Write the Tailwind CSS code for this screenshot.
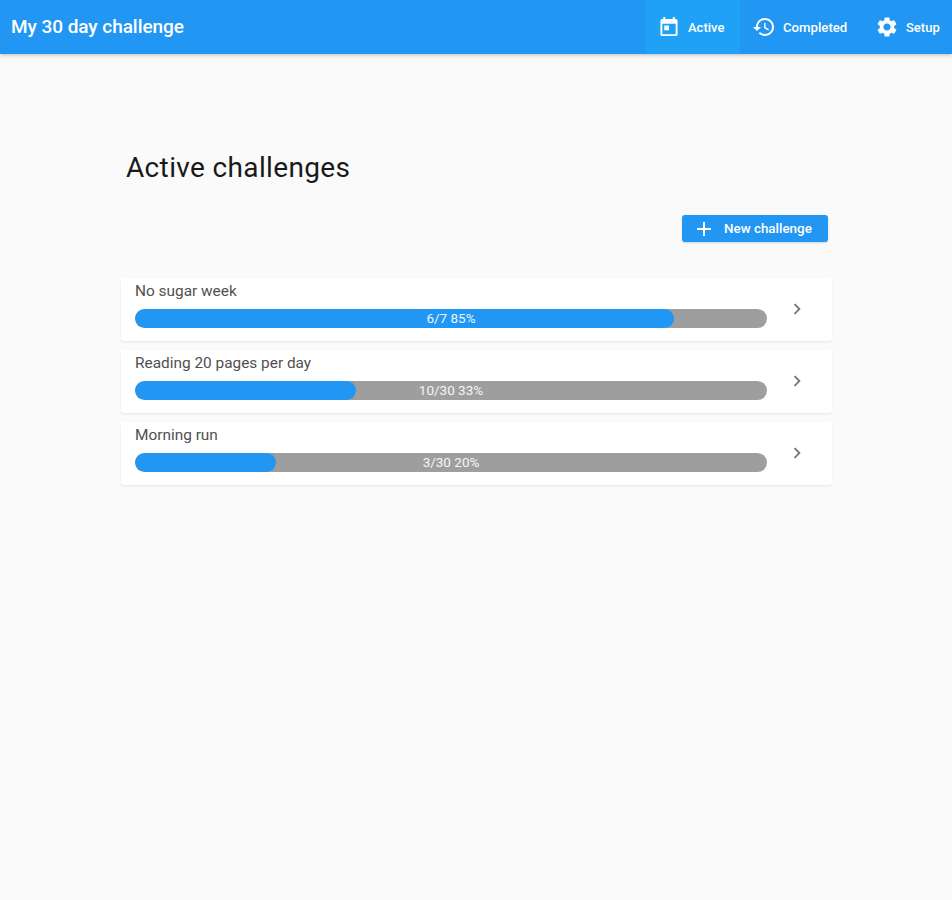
<!DOCTYPE html>
<html lang="en">
<head>
    <meta charset="UTF-8">
    <meta name="viewport" content="width=device-width, initial-scale=1.0">
    <title>My 30 day challenge</title>
    <script src="https://cdn.jsdelivr.net/npm/@tailwindcss/browser@4"></script>
</head>
<body class="bg-[#fafafa] min-h-[900px] font-['Roboto',sans-serif]">
    <!-- App bar -->
    <header class="h-[54px] bg-[#2196f3] flex items-stretch justify-between shadow-[0_1px_4px_rgba(0,0,0,0.25)] text-white">
        <div class="pl-[11px] flex items-center text-[19px] font-medium tracking-[-0.05px]">My 30 day challenge</div>
        <nav class="flex">
            <div class="w-[94px] bg-[#1fa2f6] flex items-center pl-[14px] gap-[10px] text-[13px] font-medium">
                <svg class="w-[18px] h-[20px]" viewBox="3 1 18 21" fill="#fff"><path d="M19 3h-1V1h-2v2H8V1H6v2H5c-1.1 0-2 .9-2 2v14c0 1.1.9 2 2 2h14c1.1 0 2-.9 2-2V5c0-1.1-.9-2-2-2zm0 16H5V8h14v11zM7 10h5v5H7z"/></svg>
                <span class="pt-[1px]">Active</span>
            </div>
            <div class="w-[123px] flex items-center pl-[12px] gap-[7px] text-[13.2px] font-medium">
                <svg class="w-[24px] h-[24px]" viewBox="0 0 24 24" fill="#fff"><path d="M13 3c-4.97 0-9 4.03-9 9H1l3.89 3.89.07.14L9 12H6c0-3.87 3.13-7 7-7s7 3.13 7 7-3.13 7-7 7c-1.93 0-3.68-.79-4.94-2.06l-1.42 1.42C8.27 19.99 10.51 21 13 21c4.97 0 9-4.03 9-9s-4.03-9-9-9zm-1 5v5l4.28 2.54.72-1.21-3.5-2.08V8H12z"/></svg>
                <span class="pt-[1px]">Completed</span>
            </div>
            <div class="w-[89px] flex items-center pl-[12px] gap-[7px] text-[13px] font-medium">
                <svg class="w-[24px] h-[24px]" viewBox="0 0 24 24" fill="#fff"><path d="M19.14 12.94c.04-.3.06-.61.06-.94 0-.32-.02-.64-.07-.94l2.03-1.58a.49.49 0 0 0 .12-.61l-1.92-3.32a.49.49 0 0 0-.59-.22l-2.39.96c-.5-.38-1.03-.7-1.62-.94l-.36-2.54a.484.484 0 0 0-.48-.41h-3.84c-.24 0-.43.17-.47.41l-.36 2.54c-.59.24-1.13.57-1.62.94l-2.39-.96a.48.48 0 0 0-.59.22L2.74 8.87c-.12.21-.08.47.12.61l2.03 1.58c-.05.3-.09.63-.09.94s.02.64.07.94l-2.03 1.58a.49.49 0 0 0-.12.61l1.92 3.32c.12.22.37.29.59.22l2.39-.96c.5.38 1.03.7 1.62.94l.36 2.54c.05.24.24.41.48.41h3.84c.24 0 .44-.17.47-.41l.36-2.54c.59-.24 1.13-.56 1.62-.94l2.39.96c.22.08.47 0 .59-.22l1.92-3.32c.12-.22.07-.47-.12-.61l-2.01-1.58zM12 15.6c-1.98 0-3.6-1.62-3.6-3.6s1.62-3.6 3.6-3.6 3.6 1.62 3.6 3.6-1.62 3.6-3.6 3.6z"/></svg>
                <span class="pt-[1px]">Setup</span>
            </div>
        </nav>
    </header>

    <main class="ml-[121px] w-[711px]">
        <h1 class="pt-[97px] pl-[5px] text-[28px] leading-[34px] text-[#1a1a1a] tracking-[0.35px]">Active challenges</h1>

        <div class="mt-[30px] mr-[4px] flex justify-end">
            <button class="w-[146px] h-[27px] bg-[#2196f3] rounded-[3px] text-white text-[13.4px] font-medium flex items-center pl-[10px] gap-[8px] shadow-[0_1px_2px_rgba(0,0,0,0.15)]">
                <svg class="w-[24px] h-[24px]" viewBox="0 0 24 24" fill="#fff"><path d="M19 13h-6v6h-2v-6H5v-2h6V5h2v6h6v2z"/></svg>
                <span class="pt-[1px]">New challenge</span>
            </button>
        </div>

        <div class="mt-[36px] flex flex-col gap-[9px]">
            <div class="h-[63px] bg-white rounded-[3px] shadow-[0_1px_2px_rgba(0,0,0,0.08)] pl-[14px] pr-[24px] flex items-center gap-[19px]">
                <div class="flex-1 self-start pt-[5px]">
                    <div class="text-[15.4px] leading-[17px] text-[#505050]">No sugar week</div>
                    <div class="relative mt-[9px] h-[19px] rounded-full bg-[#9e9e9e] overflow-hidden">
                        <div class="h-full w-[85.3%] rounded-full bg-[#2196f3]"></div>
                        <div class="absolute inset-0 flex items-center justify-center text-[13.5px] text-white/90">6/7 85%</div>
                    </div>
                </div>
                <svg class="w-[22px] h-[22px] -mt-[1px]" viewBox="0 0 24 24" fill="#757575"><path d="M10 6L8.59 7.41 13.17 12l-4.58 4.59L10 18l6-6z"/></svg>
            </div>
            <div class="h-[63px] bg-white rounded-[3px] shadow-[0_1px_2px_rgba(0,0,0,0.08)] pl-[14px] pr-[24px] flex items-center gap-[19px]">
                <div class="flex-1 self-start pt-[5px]">
                    <div class="text-[15.4px] leading-[17px] text-[#505050]">Reading 20 pages per day</div>
                    <div class="relative mt-[9px] h-[19px] rounded-full bg-[#9e9e9e] overflow-hidden">
                        <div class="h-full w-[35%] rounded-full bg-[#2196f3]"></div>
                        <div class="absolute inset-0 flex items-center justify-center text-[13.5px] text-white/90">10/30 33%</div>
                    </div>
                </div>
                <svg class="w-[22px] h-[22px] -mt-[1px]" viewBox="0 0 24 24" fill="#757575"><path d="M10 6L8.59 7.41 13.17 12l-4.58 4.59L10 18l6-6z"/></svg>
            </div>
            <div class="h-[63px] bg-white rounded-[3px] shadow-[0_1px_2px_rgba(0,0,0,0.08)] pl-[14px] pr-[24px] flex items-center gap-[19px]">
                <div class="flex-1 self-start pt-[5px]">
                    <div class="text-[15.4px] leading-[17px] text-[#505050]">Morning run</div>
                    <div class="relative mt-[9px] h-[19px] rounded-full bg-[#9e9e9e] overflow-hidden">
                        <div class="h-full w-[22.3%] rounded-full bg-[#2196f3]"></div>
                        <div class="absolute inset-0 flex items-center justify-center text-[13.5px] text-white/90">3/30 20%</div>
                    </div>
                </div>
                <svg class="w-[22px] h-[22px] -mt-[1px]" viewBox="0 0 24 24" fill="#757575"><path d="M10 6L8.59 7.41 13.17 12l-4.58 4.59L10 18l6-6z"/></svg>
            </div>
        </div>
    </main>
</body>
</html>
